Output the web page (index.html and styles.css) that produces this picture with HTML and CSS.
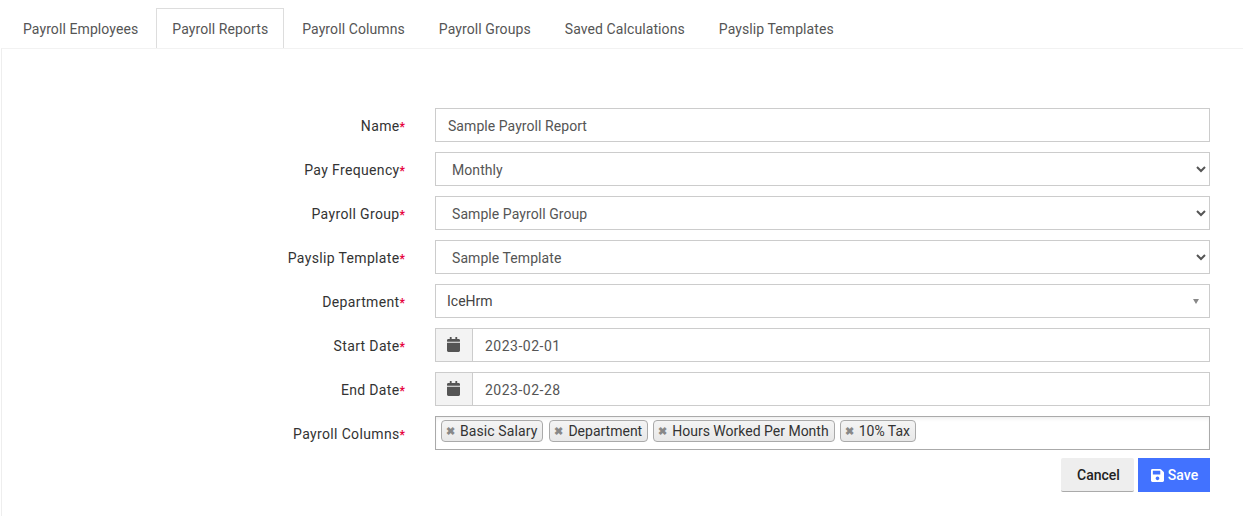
FILE: index.html
```html
<!DOCTYPE html>
<html>
    <head>
        <title>Payroll Reports</title>
        <link rel="stylesheet" href="styles.css">
    </head>
    <body>
        <ul class="tabs">
            <li class="tab">Payroll Employees</li>
            <li class="tab active">Payroll Reports</li>
            <li class="tab">Payroll Columns</li>
            <li class="tab">Payroll Groups</li>
            <li class="tab">Saved Calculations</li>
            <li class="tab">Payslip Templates</li>
        </ul>

        <div class="panel">
            <form class="report-form">
                <label class="field-label">Name<span class="req">*</span></label>
                <input class="control" type="text" value="Sample Payroll Report">

                <label class="field-label">Pay Frequency<span class="req">*</span></label>
                <select class="control select"><option>Monthly</option></select>

                <label class="field-label">Payroll Group<span class="req">*</span></label>
                <select class="control select"><option>Sample Payroll Group</option></select>

                <label class="field-label">Payslip Template<span class="req">*</span></label>
                <select class="control select"><option>Sample Template</option></select>

                <label class="field-label">Department<span class="req">*</span></label>
                <div class="control combo">
                    <span>IceHrm</span>
                    <span class="combo-arrow"></span>
                </div>

                <label class="field-label">Start Date<span class="req">*</span></label>
                <div class="date-group">
                    <span class="date-addon">
                        <svg class="cal-icon" viewBox="0 0 448 512"><path d="M12 192h424c6.6 0 12 5.4 12 12v260c0 26.5-21.5 48-48 48H48c-26.5 0-48-21.5-48-48V204c0-6.6 5.4-12 12-12zm436-44v-36c0-26.5-21.5-48-48-48h-48V12c0-6.6-5.4-12-12-12h-40c-6.6 0-12 5.4-12 12v52H160V12c0-6.6-5.4-12-12-12h-40c-6.6 0-12 5.4-12 12v52H48C21.5 64 0 85.5 0 112v36c0 6.6 5.4 12 12 12h424c6.6 0 12-5.4 12-12z"/></svg>
                    </span>
                    <input class="date-input" type="text" value="2023-02-01">
                </div>

                <label class="field-label">End Date<span class="req">*</span></label>
                <div class="date-group">
                    <span class="date-addon">
                        <svg class="cal-icon" viewBox="0 0 448 512"><path d="M12 192h424c6.6 0 12 5.4 12 12v260c0 26.5-21.5 48-48 48H48c-26.5 0-48-21.5-48-48V204c0-6.6 5.4-12 12-12zm436-44v-36c0-26.5-21.5-48-48-48h-48V12c0-6.6-5.4-12-12-12h-40c-6.6 0-12 5.4-12 12v52H160V12c0-6.6-5.4-12-12-12h-40c-6.6 0-12 5.4-12 12v52H48C21.5 64 0 85.5 0 112v36c0 6.6 5.4 12 12 12h424c6.6 0 12-5.4 12-12z"/></svg>
                    </span>
                    <input class="date-input" type="text" value="2023-02-28">
                </div>

                <label class="field-label">Payroll Columns<span class="req">*</span></label>
                <div class="tag-box">
                    <span class="tag tag-first"><span class="tag-x">&#10006;</span>Basic Salary</span>
                    <span class="tag"><span class="tag-x">&#10006;</span>Department</span>
                    <span class="tag"><span class="tag-x">&#10006;</span>Hours Worked Per Month</span>
                    <span class="tag"><span class="tag-x">&#10006;</span>10% Tax</span>
                </div>

                <div class="actions">
                    <button class="btn btn-cancel" type="button">Cancel</button>
                    <button class="btn btn-save" type="button">
                        <svg class="save-icon" viewBox="0 0 448 512"><path d="M433.941 129.941l-83.882-83.882A48 48 0 0 0 316.118 32H48C21.49 32 0 53.49 0 80v352c0 26.51 21.49 48 48 48h352c26.51 0 48-21.49 48-48V163.882a48 48 0 0 0-14.059-33.941zM224 416c-35.346 0-64-28.654-64-64 0-35.346 28.654-64 64-64s64 28.654 64 64c0 35.346-28.654 64-64 64zm96-304.52V212c0 6.627-5.373 12-12 12H76c-6.627 0-12-5.373-12-12V108c0-6.627 5.373-12 12-12h228.52c3.183 0 6.235 1.264 8.485 3.515l3.48 3.48A11.996 11.996 0 0 1 320 111.48z"/></svg>
                        Save
                    </button>
                </div>
            </form>
        </div>
    </body>
</html>
```

FILE: styles.css
```css
* {box-sizing: border-box;}

body {margin: 0; height: 516px; overflow: hidden; background-color: #fff; color: #444; font-family: Roboto, "Liberation Sans", sans-serif; font-size: 14px;}

/* tabs */
.tabs {display: flex; gap: 2px; height: 48px; margin: 0; padding: 8px 0 0 7px; list-style: none;}
.tab {height: 40px; padding: 0 15px; border: 1px solid transparent; border-bottom: 0; color: #555; letter-spacing: .09px; line-height: 40px;}
.tab.active {border-color: #ddd; background-color: #fff;}

/* form */
.panel {height: 468px; margin-left: 1px; padding: 59px 33px 0 0; border-top: 1px solid #f2f2f2; border-left: 1px solid #eee;}
.report-form {display: grid; grid-template-columns: 403px 775px; grid-auto-rows: 34px; column-gap: 30px; row-gap: 10px;}
.field-label {height: 34px; padding-top: 1px; color: #333; letter-spacing: .35px; line-height: 34px; text-align: right; white-space: nowrap;}
.req {color: #e6003c; font-size: 12px; font-weight: bold; letter-spacing: 0; line-height: 1;}

.control {width: 100%; height: 34px; padding: 1px 12px 0; border: 1px solid #ccc; border-radius: 0; background-color: #fff; color: #555; font-family: inherit; font-size: 14px; letter-spacing: .06px;}
.select {padding: 2px 0 0 12px; letter-spacing: .07px;}
.combo {display: flex; justify-content: space-between; align-items: center; padding: 0 8px 0 11px; color: #444; letter-spacing: 0;}
.combo-arrow {width: 0; height: 0; margin-right: 2px; border-top: 5px solid #888; border-left: 3.5px solid transparent; border-right: 3.5px solid transparent;}

.date-group {display: flex; height: 34px; border: 1px solid #ccc;}
.date-addon {display: flex; justify-content: center; align-items: center; width: 37px; border-right: 1px solid #ccc; background-color: #f3f3f3;}
.cal-icon {width: 13px; height: 15px; margin: -2px 1px 0 0; fill: #555;}
.date-input {flex: 1; min-width: 0; padding: 1px 12px 0; border: 0; color: #555; font-family: inherit; font-size: 14px; letter-spacing: .5px;}

.tag-box {display: flex; gap: 5px; height: 34px; padding: 3px 5px; border: 1px solid #aaa; box-shadow: inset 0 3px 4px -2px #e8e8e8;}
.tag {display: flex; align-items: center; height: 22px; padding: 0 5px; border: 1px solid #aaa; border-radius: 4px; background: linear-gradient(#f4f4f4, #e8e8e8); color: #333; white-space: nowrap;}
.tag-first {margin-right: 1px; letter-spacing: .1px;}
.tag-x {margin: 0 5px 0 -1px; color: #888; font-size: 10.5px; font-weight: bold; letter-spacing: 0;}

.actions {grid-column: 2; display: flex; justify-content: flex-end; gap: 4px; margin-top: -2px;}
.btn {height: 34px; border: 0; font-family: inherit; font-size: 14px; font-weight: 500;}
.btn-cancel {width: 73px; padding-left: 8px; border-radius: 2px; border-bottom: 1px solid #aaa; background-color: #eee; color: #222;}
.btn-save {display: flex; justify-content: center; align-items: center; gap: 4px; width: 72px; background-color: #4272ff; color: #fff;}
.save-icon {width: 13px; height: 15px; margin-left: 1px; fill: #fff;}
```
